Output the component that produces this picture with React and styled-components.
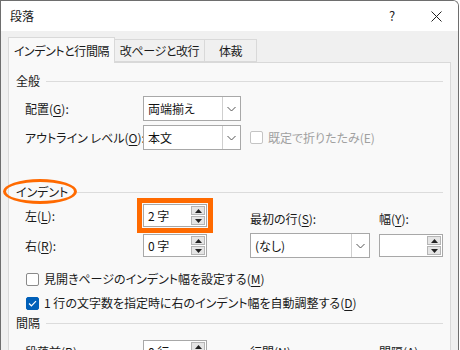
import styled, { createGlobalStyle } from 'styled-components';

const GlobalStyle = createGlobalStyle`
  html, body {
    margin: 0;
    padding: 0;
    background: #ffffff;
    overflow: hidden;
  }
  body {
    font-family: "Noto Sans CJK JP", "Noto Sans", sans-serif;
    font-feature-settings: "palt" 1;
    font-size: 12px;
    line-height: 16px;
    color: #1a1a1a;
  }
`;

const Window = styled.div`
  width: 457px;
  height: 360px;
  border: 1px solid #6e6e6e;
  border-bottom: none;
  border-top-right-radius: 6px;
  background: #f0f0f0;
  overflow: hidden;
`;

const TitleBar = styled.div`
  height: 30px;
  background: #ffffff;
  display: flex;
  align-items: center;
  padding-left: 9px;
`;

const Title = styled.div`
  flex: 1;
  font-size: 12px;
  color: #1a1a1a;
`;

const TitleButton = styled.div`
  width: 44px;
  height: 30px;
  display: flex;
  align-items: center;
  justify-content: center;
  font-size: 13px;
  color: #222;
`;

const Body = styled.div`
  padding: 6px 6px 0 7px;
`;

const TabStrip = styled.div`
  display: flex;
  align-items: flex-end;
  height: 25px;
`;

const Tab = styled.div`
  width: ${p => p.$w}px;
  height: ${p => (p.$active ? 26 : 23)}px;
  box-sizing: border-box;
  display: flex;
  align-items: center;
  justify-content: center;
  white-space: nowrap;
  overflow: hidden;
  background: ${p => (p.$active ? '#f9f9f9' : '#f0f0f0')};
  border: 1px solid #d9d9d9;
  border-bottom: ${p => (p.$active ? 'none' : '1px solid #d9d9d9')};
  border-left: ${p => (p.$active ? '1px solid #d9d9d9' : 'none')};
  margin-bottom: ${p => (p.$active ? '-1px' : '0')};
  position: relative;
  z-index: ${p => (p.$active ? 1 : 0)};
  font-size: 12px;
  letter-spacing: -0.4px;
  color: #1a1a1a;
  padding-top: 1px;
`;

const Panel = styled.div`
  width: 443px;
  height: 320px;
  box-sizing: border-box;
  background: #f9f9f9;
  border: 1px solid #d9d9d9;
  padding: 10px 7px 0 7px;
`;

const Section = styled.div`
  position: relative;
  margin-top: ${p => p.$top || 0}px;
`;

const SectionHeader = styled.div`
  display: flex;
  align-items: center;
  gap: 6px;
  height: 16px;
  font-size: 12px;
  color: #1a1a1a;
  white-space: nowrap;
  &::after {
    content: '';
    flex: 1;
    height: 1px;
    background: #dcdcdc;
  }
`;

const Ellipse = styled.div`
  position: absolute;
  left: -13px;
  top: -5px;
  width: 74px;
  height: 25px;
  box-sizing: border-box;
  border: 3.5px solid #ff6a00;
  border-radius: 50%;
  pointer-events: none;
`;

const FormGrid = styled.div`
  display: grid;
  grid-template-columns: 118px 107px 129px 64px;
  row-gap: ${p => p.$gap || 4}px;
  align-items: center;
  padding-left: 9px;
  margin-top: ${p => p.$top || 0}px;
`;

const Label = styled.div`
  font-size: 12px;
  color: #1a1a1a;
  white-space: nowrap;
  align-self: ${p => (p.$bottom ? 'end' : 'center')};
`;

const Key = styled.span`
  text-decoration: underline;
  text-underline-offset: 2px;
`;

const SelectBox = styled.div`
  width: ${p => p.$w}px;
  height: 25px;
  box-sizing: border-box;
  background: #ffffff;
  border: 1px solid #a8a8a8;
  display: flex;
  align-items: stretch;
`;

const SelectValue = styled.div`
  flex: 1;
  display: flex;
  align-items: center;
  padding-left: 4px;
  font-size: 12px;
  color: #111;
  white-space: nowrap;
`;

const SelectArrow = styled.div`
  width: 17px;
  border-left: 1px solid #cfcfcf;
  display: flex;
  align-items: center;
  justify-content: center;
`;

const SpinBox = styled.div`
  width: 64px;
  height: 23px;
  box-sizing: border-box;
  background: #ffffff;
  border: 1px solid #a8a8a8;
  display: flex;
  align-items: stretch;
  outline: ${p => (p.$highlight ? '5px solid #ff6a00' : 'none')};
  outline-offset: 1px;
`;

const SpinValue = styled.div`
  flex: 1;
  display: flex;
  align-items: center;
  padding-left: 4px;
  font-size: 12px;
  color: #111;
  white-space: nowrap;
`;

const SpinButtons = styled.div`
  width: 14px;
  display: flex;
  flex-direction: column;
  gap: 1px;
  padding: 1px 1px 1px 0;
`;

const SpinButton = styled.div`
  flex: 1;
  background: #e5e5e5;
  border: 1px solid #b5b5b5;
  display: flex;
  align-items: center;
  justify-content: center;
`;

const CheckRow = styled.div`
  display: flex;
  align-items: center;
  gap: 5px;
  height: 24px;
  padding-left: 10px;
  font-size: 12px;
  white-space: nowrap;
  color: ${p => (p.$disabled ? '#a0a0a0' : '#1a1a1a')};
`;

const InlineCheck = styled(CheckRow)`
  height: auto;
  padding-left: 0;
`;

const Box = styled.div`
  width: 13px;
  height: 13px;
  flex: none;
  box-sizing: border-box;
  border-radius: 2px;
  border: 1px solid ${p => (p.$checked ? '#005fb8' : p.$disabled ? '#c4c4c4' : '#8a8a8a')};
  background: ${p => (p.$checked ? '#005fb8' : '#ffffff')};
  display: flex;
  align-items: center;
  justify-content: center;
`;

const Spacer = styled.div`
  height: ${p => p.$h}px;
`;

function Chevron() {
  return (
    <svg width="9" height="6" viewBox="0 0 9 6">
      <path d="M0.5 1 L4.5 5 L8.5 1" fill="none" stroke="#555" strokeWidth="1" />
    </svg>
  );
}

function Tri({ up }) {
  return (
    <svg width="7" height="4" viewBox="0 0 7 4">
      <path d={up ? 'M0 4 L3.5 0 L7 4 Z' : 'M0 0 L3.5 4 L7 0 Z'} fill="#222" />
    </svg>
  );
}

function Select({ w, value }) {
  return (
    <SelectBox $w={w}>
      <SelectValue>{value}</SelectValue>
      <SelectArrow><Chevron /></SelectArrow>
    </SelectBox>
  );
}

function Spin({ value, highlight }) {
  return (
    <SpinBox $highlight={highlight}>
      <SpinValue>{value}</SpinValue>
      <SpinButtons>
        <SpinButton><Tri up /></SpinButton>
        <SpinButton><Tri /></SpinButton>
      </SpinButtons>
    </SpinBox>
  );
}

function Check({ checked, disabled }) {
  return (
    <Box $checked={checked} $disabled={disabled}>
      {checked && (
        <svg width="9" height="7" viewBox="0 0 9 7">
          <path d="M1 3.5 L3.4 5.8 L8 1.2" fill="none" stroke="#fff" strokeWidth="1.2" />
        </svg>
      )}
    </Box>
  );
}

export default function App() {
  return (
    <>
      <GlobalStyle />
      <Window>
        <TitleBar>
          <Title>段落</Title>
          <TitleButton>?</TitleButton>
          <TitleButton>
            <svg width="11" height="11" viewBox="0 0 11 11">
              <path d="M0.5 0.5 L10.5 10.5 M10.5 0.5 L0.5 10.5" stroke="#222" strokeWidth="1" />
            </svg>
          </TitleButton>
        </TitleBar>
        <Body>
          <TabStrip>
            <Tab $w={107} $active>インデントと行間隔</Tab>
            <Tab $w={90}>改ページと改行</Tab>
            <Tab $w={52}>体裁</Tab>
          </TabStrip>
          <Panel>
            <Section>
              <SectionHeader>全般</SectionHeader>
              <FormGrid $top={7}>
                <Label>配置(<Key>G</Key>):</Label>
                <Select w={98} value="両端揃え" />
                <div />
                <div />
                <Label>アウトライン レベル(<Key>O</Key>):</Label>
                <Select w={98} value="本文" />
                <InlineCheck $disabled style={{ gridColumn: '3 / 5' }}>
                  <Check disabled />
                  <span>既定で折りたたみ(E)</span>
                </InlineCheck>
              </FormGrid>
            </Section>

            <Section $top={34}>
              <SectionHeader>インデント</SectionHeader>
              <Ellipse />
              <FormGrid $top={4} $gap={6}>
                <Label>左(<Key>L</Key>):</Label>
                <Spin value="2 字" highlight />
                <Label $bottom>最初の行(<Key>S</Key>):</Label>
                <Label $bottom>幅(<Key>Y</Key>):</Label>
                <Label>右(<Key>R</Key>):</Label>
                <Spin value="0 字" />
                <Select w={120} value="(なし)" />
                <Spin value="" />
              </FormGrid>
              <Spacer $h={9} />
              <CheckRow>
                <Check />
                <span>見開きページのインデント幅を設定する(<Key>M</Key>)</span>
              </CheckRow>
              <CheckRow>
                <Check checked />
                <span>1 行の文字数を指定時に右のインデント幅を自動調整する(<Key>D</Key>)</span>
              </CheckRow>
            </Section>

            <Section>
              <SectionHeader>間隔</SectionHeader>
              <FormGrid $top={9}>
                <Label>段落前(<Key>B</Key>):</Label>
                <Spin value="0 行" />
                <Label>行間(<Key>N</Key>):</Label>
                <Label>間隔(<Key>A</Key>):</Label>
              </FormGrid>
            </Section>
          </Panel>
        </Body>
      </Window>
    </>
  );
}
